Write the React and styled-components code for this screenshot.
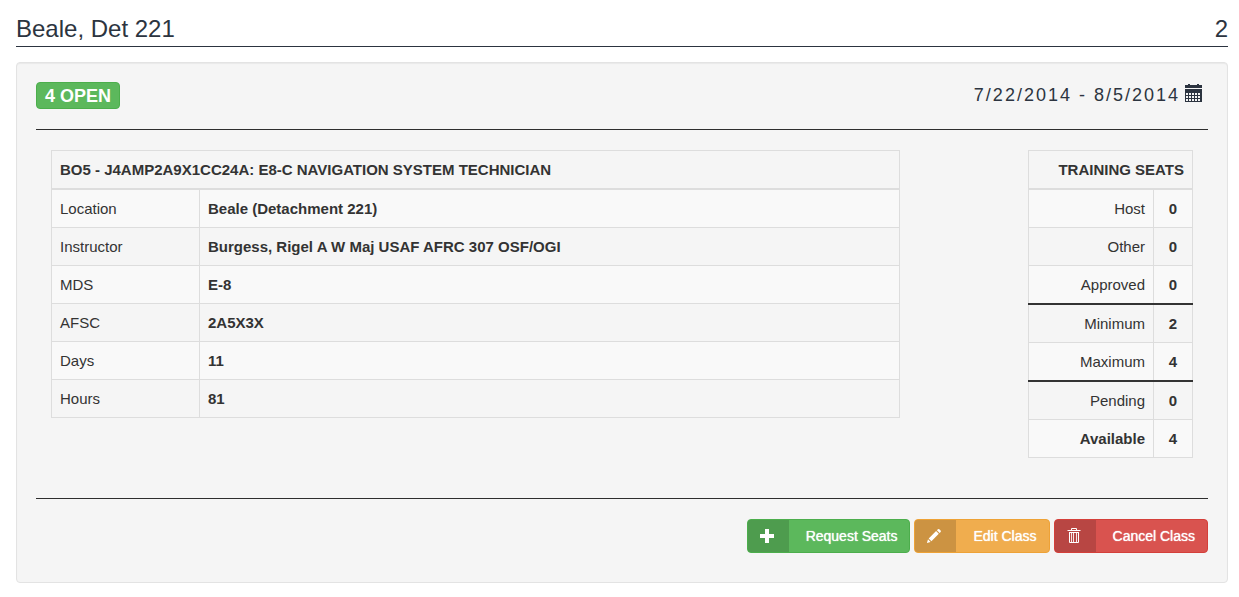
import React from "react";
import styled, { createGlobalStyle } from "styled-components";

const GlobalStyle = createGlobalStyle`
  *, *::before, *::after { box-sizing: border-box; }
  body {
    margin: 0;
    background: #fff;
    color: #333;
    font: 15px/21px "Liberation Sans", Arial, sans-serif;
  }
`;

const Page = styled.main`
  padding: 15px 11px 14px 16px;
`;

const PageHeader = styled.header`
  display: flex;
  justify-content: space-between;
  margin-bottom: 15px;
  padding-bottom: 3px;
  border-bottom: 1px solid #2c3440;
  color: #2c3440;
`;

const Title = styled.h1`
  margin: 0;
  font-size: 24px;
  line-height: 28px;
  font-weight: 400;
`;

const Count = styled.span`
  font-size: 24px;
  line-height: 28px;
`;

const Well = styled.section`
  padding: 19px 19px 29px;
  background: #f5f5f5;
  border: 1px solid #e3e3e3;
  border-radius: 4px;
  box-shadow: inset 0 1px 1px rgba(0, 0, 0, 0.05);
`;

const WellHeader = styled.div`
  display: flex;
  justify-content: space-between;
  align-items: flex-start;
  padding-bottom: 20px;
  border-bottom: 1px solid #2e2e2e;
`;

const Badge = styled.span`
  padding: 1px 8px 0;
  background: #5cb85c;
  border: 1px solid #4cae4c;
  border-radius: 4px;
  color: #fff;
  font-size: 18px;
  line-height: 24px;
  font-weight: 700;
`;

const DateRange = styled.div`
  display: flex;
  gap: 5px;
  padding-right: 5px;
  color: #2c3440;
  font-size: 18px;
  line-height: 27px;
  letter-spacing: 2px;
`;

const Columns = styled.div`
  display: grid;
  grid-template-columns: minmax(0, 9fr) minmax(0, 1fr) minmax(0, 2fr);
  align-items: start;
  padding: 20px 0 40px;
`;

const Column = styled.div`
  grid-column: ${(p) => p.$start};
  padding: 0 15px;
`;

const DataTable = styled.table`
  width: 100%;
  border-collapse: collapse;
  border: 1px solid #ddd;
  text-align: ${(p) => p.$align || "left"};
`;

const HeadCell = styled.th`
  padding: 8px;
  border-bottom: 2px solid #ddd;
  font-weight: 700;
  text-align: inherit;
`;

const Row = styled.tr`
  border-top: ${(p) => (p.$divider ? "2px solid #333" : "1px solid #ddd")};
  &:nth-child(odd) { background: #f9f9f9; }
`;

const LabelCell = styled.th`
  width: ${(p) => p.$width || "auto"};
  padding: 8px;
  font-weight: ${(p) => (p.$strong ? 700 : 400)};
  text-align: inherit;
`;

const ValueCell = styled.td`
  width: ${(p) => p.$width || "auto"};
  padding: 8px;
  border-left: 1px solid #ddd;
  font-weight: 700;
  text-align: ${(p) => p.$align || "left"};
`;

const Actions = styled.div`
  display: flex;
  justify-content: flex-end;
  gap: 4px;
  padding-top: 20px;
  border-top: 1px solid #2e2e2e;
`;

const ActionButton = styled.button`
  display: flex;
  align-items: stretch;
  height: 34px;
  padding: 0;
  overflow: hidden;
  background: ${(p) => p.$fill};
  border: 1px solid ${(p) => p.$edge};
  border-radius: 4px;
  color: #fff;
  font: 400 14px/32px "Liberation Sans", Arial, sans-serif;
  text-shadow: 0 0 1px #fff;
  cursor: pointer;
`;

const ButtonIcon = styled.span`
  display: flex;
  align-items: center;
  width: 41px;
  padding-left: 11px;
  background: rgba(0, 0, 0, 0.15);
`;

const ButtonLabel = styled.span`
  padding: 0 12px 0 17px;
`;

const CALENDAR_DAYS = [11, 14, 17].flatMap((y) => [1, 4, 7, 10, 13].map((x) => `M${x} ${y}v2h2v-2z`)).join("");

const CalendarIcon = () => (
  <svg width="18" height="20" viewBox="0 0 18 20" fill="currentColor" aria-hidden="true">
    <path d="M0 3h3V2h2v1h7V2h2v1h3v3H0z" />
    <path fillRule="evenodd" d={`M0 7h17v13H0z${CALENDAR_DAYS}`} />
  </svg>
);

const PlusIcon = () => (
  <svg width="16" height="16" viewBox="0 0 16 16" fill="currentColor" aria-hidden="true">
    <path d="M6 1h4v5h5v4h-5v5H6v-5H1V6h5z" />
  </svg>
);

const PencilIcon = () => (
  <svg width="16" height="16" viewBox="0 0 16 16" fill="currentColor" aria-hidden="true">
    <path d="M11.900 1.300a1 1 0 0 1 1.400 0l1.300 1.300a1 1 0 0 1 0 1.400l-1 1-2.700-2.700zM10.100 3.100l2.700 2.700-7.400 7.400-2.700-2.700zM2 11.300l2.600 2.600L.9 15z" />
  </svg>
);

const TrashIcon = () => (
  <svg width="16" height="18" viewBox="0 0 16 18" fill="none" stroke="currentColor" aria-hidden="true">
    <path d="M5.500 3V1.500h5V3M1.500 3.500h13M3 5.500h10M3.500 5v10.500h9V5" />
    <path strokeOpacity="0.85" d="M5.500 5v10M7.500 5v10M10.500 5v10" />
  </svg>
);

const details = [
  ["Location", "Beale (Detachment 221)"],
  ["Instructor", "Burgess, Rigel A W Maj USAF AFRC 307 OSF/OGI"],
  ["MDS", "E-8"],
  ["AFSC", "2A5X3X"],
  ["Days", "11"],
  ["Hours", "81"],
];

const seats = [
  { label: "Host", value: 0 },
  { label: "Other", value: 0 },
  { label: "Approved", value: 0 },
  { label: "Minimum", value: 2, divider: true },
  { label: "Maximum", value: 4 },
  { label: "Pending", value: 0, divider: true },
  { label: "Available", value: 4, strong: true },
];

const actions = [
  { label: "Request Seats", Icon: PlusIcon, fill: "#5cb85c", edge: "#4cae4c" },
  { label: "Edit Class", Icon: PencilIcon, fill: "#f0ad4e", edge: "#eea236" },
  { label: "Cancel Class", Icon: TrashIcon, fill: "#d9534f", edge: "#d43f3a" },
];

export default function App() {
  return (
    <>
      <GlobalStyle />
      <Page>
        <PageHeader>
          <Title>Beale, Det 221</Title>
          <Count>2</Count>
        </PageHeader>
        <Well>
          <WellHeader>
            <Badge>4 OPEN</Badge>
            <DateRange>
              7/22/2014 - 8/5/2014
              <CalendarIcon />
            </DateRange>
          </WellHeader>
          <Columns>
            <Column $start={1}>
              <DataTable>
                <thead>
                  <tr>
                    <HeadCell colSpan={2}>BO5 - J4AMP2A9X1CC24A: E8-C NAVIGATION SYSTEM TECHNICIAN</HeadCell>
                  </tr>
                </thead>
                <tbody>
                  {details.map(([label, value]) => (
                    <Row key={label}>
                      <LabelCell scope="row" $width="148px">{label}</LabelCell>
                      <ValueCell>{value}</ValueCell>
                    </Row>
                  ))}
                </tbody>
              </DataTable>
            </Column>
            <Column $start={3}>
              <DataTable $align="right">
                <thead>
                  <tr>
                    <HeadCell colSpan={2}>TRAINING SEATS</HeadCell>
                  </tr>
                </thead>
                <tbody>
                  {seats.map((seat) => (
                    <Row key={seat.label} $divider={seat.divider}>
                      <LabelCell scope="row" $strong={seat.strong}>{seat.label}</LabelCell>
                      <ValueCell $width="39px" $align="center">{seat.value}</ValueCell>
                    </Row>
                  ))}
                </tbody>
              </DataTable>
            </Column>
          </Columns>
          <Actions>
            {actions.map(({ label, Icon, fill, edge }) => (
              <ActionButton key={label} type="button" $fill={fill} $edge={edge}>
                <ButtonIcon><Icon /></ButtonIcon>
                <ButtonLabel>{label}</ButtonLabel>
              </ActionButton>
            ))}
          </Actions>
        </Well>
      </Page>
    </>
  );
}
